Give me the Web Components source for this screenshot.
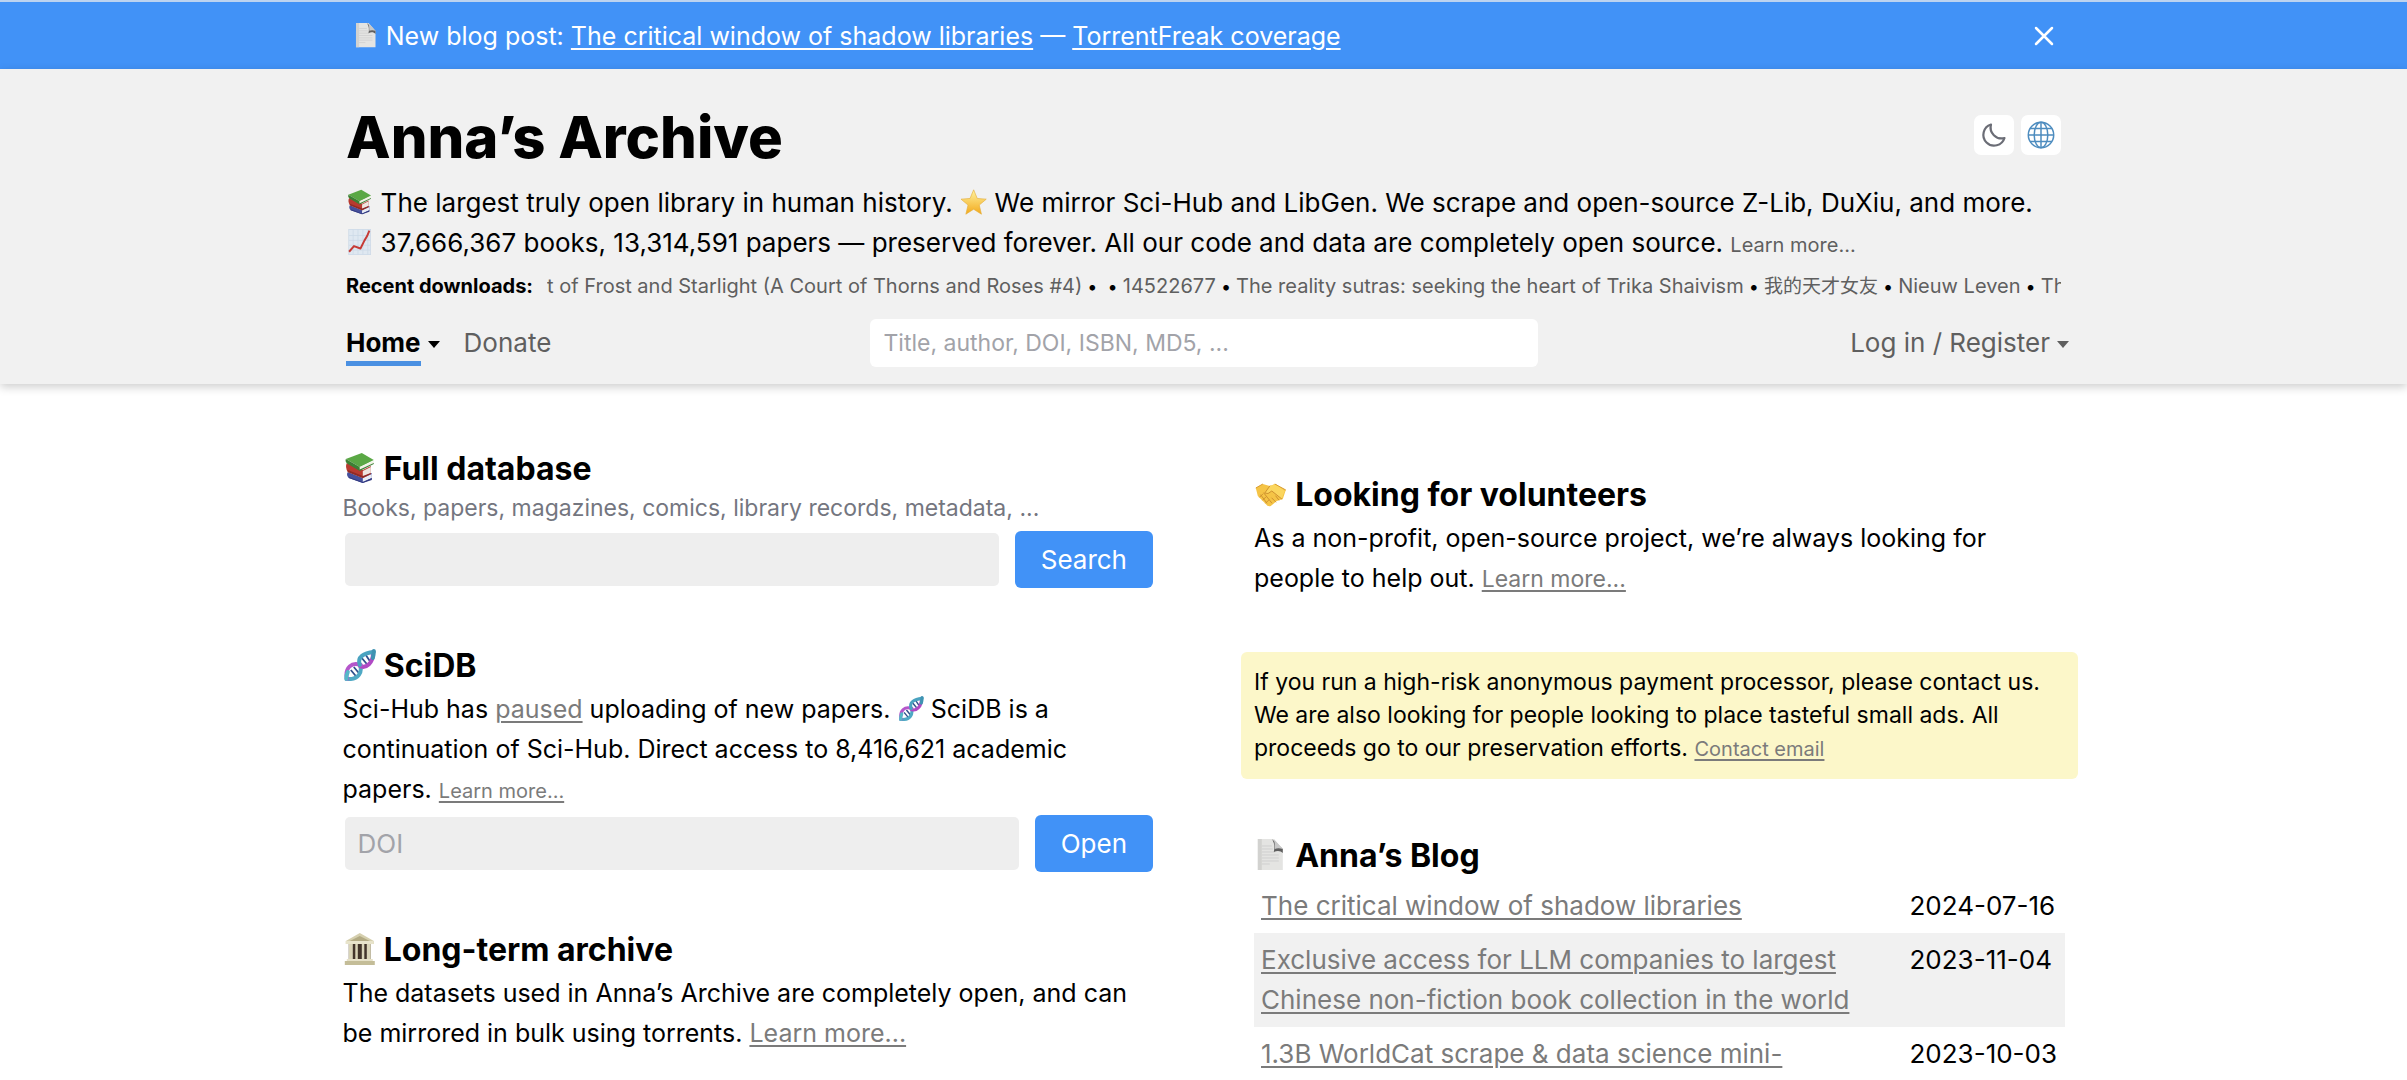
<!DOCTYPE html>
<html lang="en">
<head>
<meta charset="utf-8">
<meta name="viewport" content="width=device-width, initial-scale=1">
<title>Anna’s Archive</title>
<style>
  :root { --blue: #4192f7; --panel: #f1f1f1; --muted: #5f5f5f; --link: #7b7b7b; --yellow: #fcf7c9; }
  html { overflow: hidden; height: 100%; }
  body { margin: 0; height: 100%; overflow: hidden; background: #fff; color: #000;
    font: 26px/40px Inter, "Noto Sans CJK SC", sans-serif; }
  a { color: var(--link); text-decoration-thickness: 2px; text-underline-offset: 3px; }
  p { margin: 0; }
  .small { font-size: 20px; line-height: 20px; }
  .medium { font-size: 23px; line-height: 23px; }
  .plain { color: var(--muted); text-decoration: none; }
  site-banner { font-size: 25px; }
  site-banner a { color: #fff; }
  page-section { font-size: 25px; }
</style>
</head>
<body>
<site-banner>
  <emoji-icon name="page"></emoji-icon> New blog post: <a href="#blog">The critical window of shadow libraries</a> — <a href="#torrentfreak">TorrentFreak coverage</a>
</site-banner>
<site-header>
  <p><emoji-icon name="books"></emoji-icon> The largest truly open library in human history. <emoji-icon name="star"></emoji-icon> We mirror Sci-Hub and LibGen. We scrape and open-source Z-Lib, DuXiu, and more.</p>
  <p><emoji-icon name="chart"></emoji-icon> 37,666,367 books, 13,314,591 papers — preserved forever. All our code and data are completely open source. <a class="small plain" href="#about">Learn more...</a></p>
</site-header>
<page-columns>
  <page-section slot="left" icon="books" heading="Full database">
    <p slot="sub">Books, papers, magazines, comics, library records, metadata, ...</p>
    <query-form slot="form" action-label="Search" label="Search the full database"></query-form>
  </page-section>
  <page-section slot="left" icon="dna" heading="SciDB">
    <p>Sci-Hub has <a href="#paused">paused</a> uploading of new papers. <emoji-icon name="dna"></emoji-icon> SciDB is a continuation of Sci-Hub. Direct access to 8,416,621 academic papers. <a class="small" href="#scidb">Learn more...</a></p>
    <query-form slot="form" action-label="Open" label="Open a DOI" hint="DOI"></query-form>
  </page-section>
  <page-section slot="left" icon="temple" heading="Long-term archive">
    <p>The datasets used in Anna’s Archive are completely open, and can be mirrored in bulk using torrents. <a href="#datasets">Learn more...</a></p>
  </page-section>
  <notice-box slot="left" class="follow"></notice-box>

  <page-section slot="right" icon="hands" heading="Looking for volunteers">
    <p>As a non-profit, open-source project, we’re always looking for people to help out. <a class="medium" href="#volunteer">Learn more...</a></p>
  </page-section>
  <notice-box slot="right">If you run a high-risk anonymous payment processor, please contact us. We are also looking for people looking to place tasteful small ads. All proceeds go to our preservation efforts. <a class="small" href="#contact">Contact email</a></notice-box>
  <page-section slot="right" icon="page" heading="Anna’s Blog" id="blog">
    <blog-list slot="form"></blog-list>
  </page-section>
</page-columns>

<script>
const ICONS = {
  page: `<path d="M3 0h16l9 10v21H3z" fill="#e4e4e2"/><path d="M3 0h4v31H3z" fill="#d2d2d0"/><path d="M7 7h10M7 10h11M7 13h13M7 16h17M7 19h17M7 22h17M7 25h8" stroke="#cfcfcf" stroke-width="1"/><path d="M17 0c3 4 3 9 2 13 4-2 7-1 9 1v-4z" fill="#5f5f5f"/><path d="M19 0l9 10c-3-1-6-1-8 0 0-3 0-7-1-10z" fill="#c8c8c8"/>`,
  books: `<path d="M4 20l15 6 9-5v6l-9 4-14-5q-3-3-1-6z" fill="#46509c"/><path d="M19 26l9-4v4l-9 4z" fill="#e9edf5"/><path d="M5 25l14 5 9-4v2l-9 3-14-5z" fill="#323a80"/><path d="M3 11l16 7 8-4v8l-8 4-15-6q-3-5-1-9z" fill="#b83a30"/><path d="M19 19l8-4v6l-8 4z" fill="#eee5e0"/><path d="M19 24l8-3v1l-8 4-15-6v-2z" fill="#8f2b27"/><path d="M2 7L18 1l12 7-14 7z" fill="#5aa845"/><path d="M2 7l14 8v4L4 12q-3-2-2-5z" fill="#3c8034"/><path d="M16 15l14-6v2l-14 7z" fill="#f1f2e6"/><path d="M16 17.500l14-6.500v1l-14 7z" fill="#3c8034"/>`,
  star: `<defs><linearGradient id="g" x2="0" y2="1"><stop stop-color="#fff3a0"/><stop offset="1" stop-color="#f3a91b"/></linearGradient></defs><path d="M16 1l4.4 10.6L31.500 12.500l-8.600 7.300L25.600 31 16 24.900 6.400 31l2.700-11.200L.5 12.500l11.100-.9z" fill="url(#g)" stroke="#e5ae3b" stroke-width=".8" stroke-linejoin="round"/>`,
  chart: `<path d="M2 0h28v32H2z" fill="#cfdbe8"/><path d="M3 1h26v30H3z" fill="#dfe8f1"/><path d="M8 1v30M14 1v30M20 1v30M26 1v30M3 8h26M3 14h26M3 20h26M3 26h26" stroke="#cbd8e6" stroke-width=".9"/><path d="M3 28l6-7 8 3 5-10 3-5 3-7" fill="none" stroke="#c63a35" stroke-width="2.400" stroke-linejoin="round"/>`,
  dna: `<path d="M7 21l5 6M10 18l5 6M18 9l5 6M22 6l4 6" stroke="#2f4f8c" stroke-width="1.800"/><g fill="none" stroke-width="4" stroke-linecap="round"><path d="M3 30C15 31 19 23 16 15" stroke="#4fa9c4"/><path d="M16 17C22 20 30 14 29 3" stroke="#b04ac4"/><path d="M3 30C1 18 8 13 17 16" stroke="#b556cb"/><path d="M16 16C13 8 20 4 30 3" stroke="#4aa3c0"/><path d="M2.500 30Q2.500 26 4 23" stroke="#56b7c8"/><path d="M30 2Q30 6 29 9" stroke="#3f93b2"/></g>`,
  temple: `<path d="M16 0l14 8v3H2V8z" fill="#d5cfae"/><path d="M16 3L26 8H6z" fill="#b2aa83"/><path d="M2 8h28v3H2z" fill="#e8e4cb"/><path d="M5 11h22v15H5z" fill="#42352b"/><path d="M5 11h4v15H5zM11.500 11h2.500v15h-2.500zM18 11h2.500v15H18zM23 11h4v15h-4z" fill="#d9d4b8"/><path d="M3 26h26v2H3z" fill="#e6e1c8"/><path d="M1 28h30v4H1z" fill="#c4bd98"/>`,
  hands: `<path d="M1 10l7-4 7 2 5-2 11 6-3 9-6 2-6 5q-3 1-5-2l-8-8z" fill="#f5c446"/><path d="M15 8l-5 7q3 2 7-2l10 8q1-4 3-8L21 6z" fill="#fbd65e"/><path d="M15 8l-5 7q3 2 7-2l10 8M6 17l6 8M9 15l8 10M21 18l3 4M17 20l4 4M5 19l3-3M8 22l3-3M11 25l3-3" fill="none" stroke="#cf9230" stroke-width="1" stroke-linecap="round"/><path d="M1 10l7-4M20 6l11 6" stroke="#d99c2e" stroke-width="1"/>`
};

function define(name, render) {
  customElements.define(name, class extends HTMLElement {
    connectedCallback() {
      if (this.shadowRoot) return;
      this.attachShadow({ mode: "open" }).innerHTML = render(this);
    }
  });
}

define("emoji-icon", el => `
  <style>
    :host { display: inline-block; width: 1.05em; height: 1em; vertical-align: -0.12em; line-height: 0; }
    svg { width: 100%; height: 100%; display: block; }
  </style>
  <svg viewBox="0 0 32 32" aria-hidden="true">${ICONS[el.getAttribute("name")]}</svg>`);

define("site-banner", () => `
  <style>
    :host { display: block; background: var(--blue); color: #fff; border-top: 2px solid #bcd3f0; }
    .inner { max-width: 1702px; margin: 0 auto; padding: 14px 0 13px; display: flex; justify-content: space-between; align-items: center; }
    button { border: 0; background: none; padding: 0; display: flex; }
    svg { width: 22px; height: 22px; }
  </style>
  <div class="inner"><div><slot></slot></div>
    <button type="button" aria-label="Close"><svg viewBox="0 0 22 22"><path d="M3 3l16 16M19 3L3 19" stroke="#fff" stroke-width="2.500" stroke-linecap="round"/></svg></button>
  </div>`);

define("site-header", () => `
  <style>
    :host { display: block; background: var(--panel); box-shadow: 0 3px 9px rgba(0,0,0,.2); }
    .inner { max-width: 1715px; margin: 0 auto; padding: 36px 0 17px; }
    .top { display: flex; justify-content: space-between; margin-bottom: 14px; }
    h1 { margin: 0; font-size: 58px; line-height: 64px; font-weight: 800; }
    .tools { display: flex; gap: 7px; padding-top: 10px; }
    .tools button { width: 40px; height: 40px; padding: 0; border: 0; border-radius: 7px; background: #fff; display: grid; place-items: center; }
    .tools svg { width: 28px; height: 28px; }
    .recent { display: flex; gap: 14px; margin: 8px 0 18px; font-size: 20px; line-height: 30px; white-space: nowrap; }
    .ticker { flex: 1; min-width: 0; overflow: hidden; }
    .ticker a, nav a { color: var(--muted); text-decoration: none; }
    .ticker span { font-size: 18px; line-height: 18px; }
    .ticker [lang] { font-size: 19px; line-height: 19px; }
    nav { display: grid; grid-template-columns: 1fr 668px 1fr; align-items: center; }
    .links { display: flex; gap: 24px; }
    .links .current { color: #000; font-weight: 700; }
    .current span { border-bottom: 5px solid #4a90e2; padding-bottom: 3px; }
    .caret { display: inline-block; border: 6px solid transparent; border-top: 7px solid currentColor; border-bottom: 0; vertical-align: 4px; margin-left: 7px; }
    .account { justify-self: end; margin-right: -8px; }
    input { width: 100%; height: 48px; box-sizing: border-box; border: 0; border-radius: 6px; padding: 0 14px; background: #fff; font: 23px Inter, sans-serif; }
    input::placeholder { color: #a2a3a9; opacity: 1; }
  </style>
  <div class="inner">
    <div class="top"><h1>Anna’s Archive</h1>
      <div class="tools">
        <button type="button" aria-label="Dark mode"><svg viewBox="0 0 28 28"><path d="M11 3.500A10.800 10.800 0 1 0 24.500 17 11 11 0 0 1 11 3.500z" fill="none" stroke="#6b6d76" stroke-width="2.200" stroke-linejoin="round"/></svg></button>
        <button type="button" aria-label="Language"><svg viewBox="0 0 28 28" fill="none" stroke="#4d8cbf" stroke-width="1.500"><circle cx="14" cy="14" r="12.700"/><ellipse cx="14" cy="14" rx="6.800" ry="12.700"/><path d="M14 1v26M1 14h26M3 7.500h22M3 20.500h22"/></svg></button>
      </div>
    </div>
    <slot></slot>
    <div class="recent"><strong>Recent downloads:</strong>
      <div class="ticker"><a href="#d1">t of Frost and Starlight (A Court of Thorns and Roses #4)</a><span> • &nbsp;• </span><a href="#d2">14522677</a><span> • </span><a href="#d3">The reality sutras: seeking the heart of Trika Shaivism</a><span> • </span><a href="#d4" lang="zh">我的天才女友</a><span> • </span><a href="#d5">Nieuw Leven</a><span> • </span><a href="#d6">Th</a></div>
    </div>
    <nav>
      <div class="links"><a class="current" href="#home"><span>Home</span><i class="caret"></i></a><a href="#donate">Donate</a></div>
      <input type="text" aria-label="Search" placeholder="Title, author, DOI, ISBN, MD5, ...">
      <a class="account" href="#login">Log in / Register<i class="caret"></i></a>
    </nav>
  </div>`);

define("page-columns", () => `
  <style>
    :host { display: grid; grid-template-columns: minmax(0,1fr) minmax(0,1fr); column-gap: 101px; max-width: 1722px; margin: 0 auto; padding-top: 62px; align-items: start; }
    div { display: flex; flex-direction: column; gap: 55px; }
    .right { padding-top: 26px; gap: 54px; }
    ::slotted(.follow) { margin-top: -28px; }
  </style>
  <div><slot name="left"></slot></div>
  <div class="right"><slot name="right"></slot></div>`);

define("page-section", el => `
  <style>
    :host { display: block; }
    h2 { margin: 0; font-size: 32px; line-height: 46px; font-weight: 700; }
    ::slotted([slot=sub]) { color: #74767f; font-size: 23px; line-height: 33px; }
  </style>
  <h2><emoji-icon name="${el.getAttribute("icon")}"></emoji-icon> ${el.getAttribute("heading")}</h2>
  <slot name="sub"></slot><slot></slot><slot name="form"></slot>`);

define("query-form", el => `
  <style>
    :host { display: block; margin-top: 6px; }
    form { display: flex; gap: 16px; padding-left: 2px; align-items: center; }
    input { flex: 1; min-width: 0; height: 53px; box-sizing: border-box; border: 0; border-radius: 5px; background: #eee; padding: 0 13px; font: 26px Inter, sans-serif; }
    input::placeholder { color: #a2a3a9; opacity: 1; }
    button { height: 57px; padding: 0 26px; border: 0; border-radius: 6px; background: var(--blue); color: #fff; font: 26px Inter, sans-serif; }
  </style>
  <form><input type="text" aria-label="${el.getAttribute("label")}" placeholder="${el.getAttribute("hint") || ""}"><button type="button">${el.getAttribute("action-label")}</button></form>`);

define("notice-box", () => `
  <style>:host { display: block; margin: 0 -13px; padding: 14px 13px; border-radius: 6px; background: var(--yellow); font-size: 23px; line-height: 33px; min-height: 99px; }</style>
  <slot></slot>`);

define("blog-list", () => `
  <style>
    :host { display: block; font-size: 26px; }
    table { width: 100%; border-collapse: collapse; font: inherit; }
    td { padding: 7px; vertical-align: top; text-align: left; }
    td:last-child { width: 148px; white-space: nowrap; }
    tr:nth-child(even) { background: #f1f1f1; }
    a { color: var(--link); text-decoration-thickness: 2px; text-underline-offset: 3px; }
  </style>
  <table><tbody>
    <tr><td><a href="#p1">The critical window of shadow libraries</a></td><td>2024-07-16</td></tr>
    <tr><td><a href="#p2">Exclusive access for LLM companies to largest Chinese non-fiction book collection in the world</a></td><td>2023-11-04</td></tr>
    <tr><td><a href="#p3">1.3B WorldCat scrape &amp; data science mini-</a></td><td>2023-10-03</td></tr>
  </tbody></table>`);
</script>
</body>
</html>
